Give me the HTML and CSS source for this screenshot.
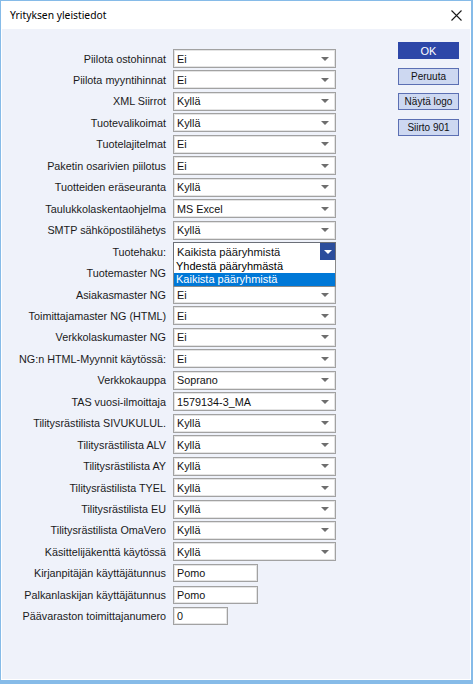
FILE: index.html
```html
<!DOCTYPE html>
<html lang="fi">
<head>
<meta charset="utf-8">
<title>Yrityksen yleistiedot</title>
<link rel="stylesheet" href="styles.css">
</head>
<body>
<div class="window">
  <div class="titlebar">
    <span class="title">Yrityksen yleistiedot</span>
    <svg class="close" width="11" height="11" viewBox="0 0 11 11"><path d="M0.5 0.5L10.5 10.5M10.5 0.5L0.5 10.5" stroke="#1a1a1a" stroke-width="1.1" fill="none"/></svg>
  </div>
  <div class="content">
    <div class="form">
      <label>Piilota ostohinnat</label><div class="sel">Ei</div>
      <label>Piilota myyntihinnat</label><div class="sel">Ei</div>
      <label>XML Siirrot</label><div class="sel">Kyllä</div>
      <label>Tuotevalikoimat</label><div class="sel">Kyllä</div>
      <label>Tuotelajitelmat</label><div class="sel">Ei</div>
      <label>Paketin osarivien piilotus</label><div class="sel">Ei</div>
      <label>Tuotteiden eräseuranta</label><div class="sel">Kyllä</div>
      <label>Taulukkolaskentaohjelma</label><div class="sel">MS Excel</div>
      <label>SMTP sähköpostilähetys</label><div class="sel">Kyllä</div>
      <label>Tuotehaku:</label>
      <div class="sel open">Kaikista pääryhmistä
        <span class="arrowbox"></span>
        <ul class="list">
          <li>Yhdestä pääryhmästä</li>
          <li class="hl">Kaikista pääryhmistä</li>
        </ul>
      </div>
      <label>Tuotemaster NG</label><div class="sel covered"></div>
      <label>Asiakasmaster NG</label><div class="sel">Ei</div>
      <label>Toimittajamaster NG (HTML)</label><div class="sel">Ei</div>
      <label>Verkkolaskumaster NG</label><div class="sel">Ei</div>
      <label>NG:n HTML-Myynnit käytössä:</label><div class="sel">Ei</div>
      <label>Verkkokauppa</label><div class="sel">Soprano</div>
      <label>TAS vuosi-ilmoittaja</label><div class="sel">1579134-3_MA</div>
      <label>Tilitysrästilista SIVUKULUL.</label><div class="sel">Kyllä</div>
      <label>Tilitysrästilista ALV</label><div class="sel">Kyllä</div>
      <label>Tilitysrästilista AY</label><div class="sel">Kyllä</div>
      <label>Tilitysrästilista TYEL</label><div class="sel">Kyllä</div>
      <label>Tilitysrästilista EU</label><div class="sel">Kyllä</div>
      <label>Tilitysrästilista OmaVero</label><div class="sel">Kyllä</div>
      <label>Käsittelijäkenttä käytössä</label><div class="sel">Kyllä</div>
      <label>Kirjanpitäjän käyttäjätunnus</label><div class="txt">Pomo</div>
      <label>Palkanlaskijan käyttäjätunnus</label><div class="txt">Pomo</div>
      <label>Päävaraston toimittajanumero</label><div class="txt short">0</div>
    </div>
    <div class="buttons">
      <div class="btn primary">OK</div>
      <div class="btn">Peruuta</div>
      <div class="btn">Näytä logo</div>
      <div class="btn">Siirto 901</div>
    </div>
  </div>
</div>
</body>
</html>
```

FILE: styles.css
```css
html, body {
  margin: 0;
  padding: 0;
  background: #ffffff;
}

body {
  font-family: "Liberation Sans", Arial, sans-serif;
  font-size: 10.8px;
  color: #1a1a1a;
}

.window {
  width: 473px;
  height: 684px;
  box-sizing: border-box;
  border: 1px solid #86bbe8;
  border-right-width: 2px;
  border-bottom-width: 4px;
  background: #ffffff;
  display: flex;
  flex-direction: column;
}

.titlebar {
  height: 28px;
  flex: none;
  display: flex;
  align-items: center;
  justify-content: space-between;
  padding: 0 9px 0 9px;
}

.title {
  font-family: "Noto Sans", sans-serif;
  font-size: 10.3px;
  color: #000;
}

.close {
  display: block;
}

.content {
  flex: 1;
  margin: 0 1px 1px 1px;
  background: #eff2fa;
  display: flex;
  align-items: flex-start;
}

.form {
  margin-top: 18.8px;
  display: grid;
  grid-template-columns: 164px auto;
  grid-auto-rows: 21.46px;
  column-gap: 7px;
  align-items: center;
}

.form label {
  text-align: right;
  white-space: nowrap;
}

.sel {
  position: relative;
  width: 163px;
  height: 19px;
  box-sizing: border-box;
  border: 1px solid #a2a2a2;
  box-shadow: inset 0 0 0 1px #e4e4e4;
  background: #ffffff;
  display: flex;
  align-items: center;
  padding-left: 3px;
  color: #111;
}

.sel::after {
  content: "";
  margin-left: auto;
  margin-right: 6px;
  border-left: 4px solid transparent;
  border-right: 4px solid transparent;
  border-top: 4px solid #6e6e6e;
}

.sel.open {
  border-color: #6b6f78;
  box-shadow: none;
  font-size: 11.2px;
  z-index: 2;
}

.sel.open::after {
  display: none;
}

.arrowbox {
  margin-left: auto;
  width: 15px;
  height: 17px;
  background: #2b4d9c;
  display: flex;
  align-items: center;
  justify-content: center;
}

.arrowbox::after {
  content: "";
  border-left: 4px solid transparent;
  border-right: 4px solid transparent;
  border-top: 4px solid #ffffff;
}

.list {
  position: absolute;
  top: 100%;
  left: -1px;
  width: 163px;
  box-sizing: border-box;
  margin: 0;
  padding: 0;
  list-style: none;
  background: #ffffff;
  border: 1px solid #8a8a8a;
  border-top: none;
}

.list li {
  height: 13px;
  line-height: 13px;
  padding-left: 2px;
  font-size: 11px;
  color: #000;
}

.list li.hl {
  background: #0078d7;
  color: #ffffff;
}

.txt {
  width: 85px;
  height: 18px;
  box-sizing: border-box;
  border: 1px solid #a2a2a2;
  box-shadow: inset 0 0 0 1px #e4e4e4;
  background: #ffffff;
  display: flex;
  align-items: center;
  padding-left: 3px;
  color: #111;
}

.txt.short {
  width: 55px;
}

.buttons {
  margin-top: 13px;
  margin-left: 62px;
  display: flex;
  flex-direction: column;
  gap: 8.7px;
}

.btn {
  width: 61px;
  height: 17px;
  box-sizing: border-box;
  border: 1px solid #5b6fb3;
  background: #cdd8f1;
  display: flex;
  align-items: center;
  justify-content: center;
  font-size: 10px;
  color: #111;
}

.btn.primary {
  background: #2d47a8;
  border-color: #2d47a8;
  font-size: 11px;
  color: #ffffff;
}
```
